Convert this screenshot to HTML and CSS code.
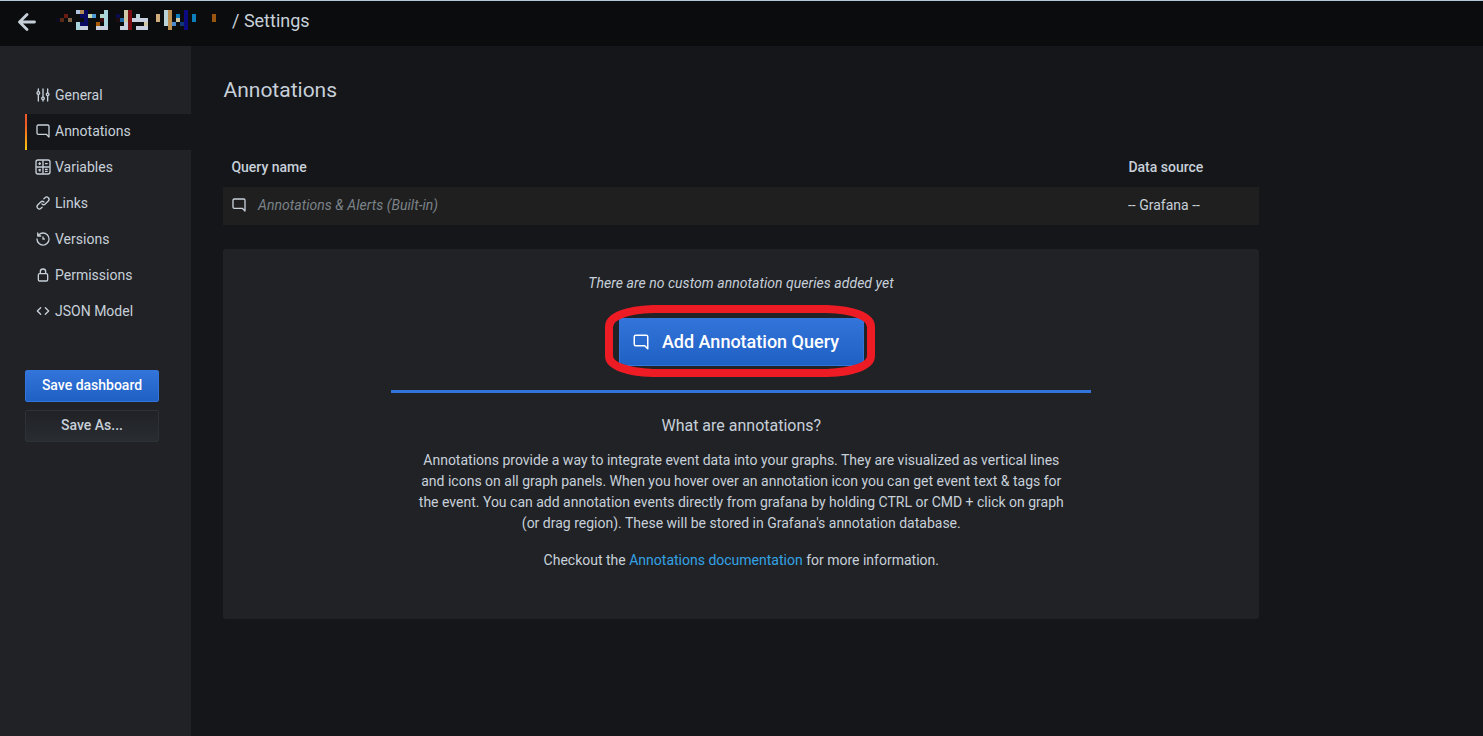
FILE: index.html
```
<!DOCTYPE html>
<html lang="en">
<head>
<meta charset="utf-8">
<title>Settings</title>
<link rel="stylesheet" href="styles.css">
</head>
<body>
<svg class="defs" aria-hidden="true">
  <symbol id="comment" viewBox="0 0 24 24"><path d="M19 2H5a3 3 0 0 0-3 3v10a3 3 0 0 0 3 3h11.59l3.7 3.71A1 1 0 0 0 21 22a.84.84 0 0 0 .38-.08A1 1 0 0 0 22 21V5a3 3 0 0 0-3-3Zm1 16.59-2.29-2.3A1 1 0 0 0 17 16H5a1 1 0 0 1-1-1V5a1 1 0 0 1 1-1h14a1 1 0 0 1 1 1Z"/></symbol>
</svg>
<header class="topbar">
  <svg class="back" viewBox="0 0 18 18"><path d="M9 1.500 1.500 9 9 16.500M2 9H16.500"/></svg>
  <svg class="mosaic" viewBox="0 0 40 5" shape-rendering="crispEdges">
    <path fill="#0d0b20" d="M0 2h1v1h-1z"/><path fill="#5a2a18" d="M1 2h1v1h-1z"/><path fill="#6b1c12" d="M2 1h1v1h-1z"/><path fill="#806448" d="M3 2h1v1h-1z"/>
    <path fill="#b0c2df" d="M5 0h1v1h-1z"/><path fill="#b38b56" d="M6 0h1v1h-1z"/><path fill="#09095f" d="M7 0h1v4h-1zM6 1h1v1h-1zM6 3h1v1h-1z"/>
    <path fill="#c8d8b0" d="M8 1h1v1h-1z"/><path fill="#4c9bd6" d="M9 1h1v1h-1z"/><path fill="#c8d0e0" d="M6 4h2v1h-2zM10 4h3v1h-3z"/>
    <path fill="#a8d4dc" d="M5 3h1v2h-1zM12 0h1v4h-1z"/><path fill="#b0d8c8" d="M11 1h1v1h-1z"/><path fill="#a85a08" d="M10 3h1v1h-1z"/><path fill="#3a0c10" d="M11 2h1v1h-1z"/>
    <path fill="#0d0b50" d="M15 1h1v1h-1z"/><path fill="#1c0c10" d="M15 2h1v1h-1z"/><path fill="#1f68a8" d="M16 2h1v1h-1z"/>
    <path fill="#d0c8a4" d="M17 0h1v3h-1zM22 3h1v1h-1zM30 2h1v1h-1z"/><path fill="#7a0d12" d="M18 0h1v5h-1z"/>
    <path fill="#c8d0e0" d="M17 3h1v1h-1zM16 4h2v1h-2zM19 2h4v1h-4zM20 4h3v1h-3z"/>
    <path fill="#b9d4d8" d="M20 1h1v1h-1zM27 0h1v4h-1z"/><path fill="#cfac7c" d="M25 1h1v2h-1z"/><path fill="#bc9050" d="M28 0h1v5h-1z"/>
    <path fill="#0e7ebc" d="M30 1h1v1h-1zM34 1h1v2h-1z"/><path fill="#4c8acb" d="M29 3h1v1h-1z"/><path fill="#103878" d="M31 3h1v1h-1z"/><path fill="#0b0a80" d="M32 0h1v5h-1z"/><path fill="#9a5610" d="M39 1h1v2h-1z"/>
  </svg>
  <span class="crumb">/ Settings</span>
</header>
<div class="body">
  <aside class="sidebar">
    <nav>
      <a class="item"><svg viewBox="0 0 24 24"><path d="M20 8.18V3a1 1 0 0 0-2 0v5.18a3 3 0 0 0 0 5.64V21a1 1 0 0 0 2 0v-7.18a3 3 0 0 0 0-5.64ZM19 12a1 1 0 1 1 0-2 1 1 0 0 1 0 2Zm-6 2.18V3a1 1 0 0 0-2 0v11.18a3 3 0 0 0 0 5.64V21a1 1 0 0 0 2 0v-1.18a3 3 0 0 0 0-5.64ZM12 18a1 1 0 1 1 0-2 1 1 0 0 1 0 2ZM6 6.18V3a1 1 0 0 0-2 0v3.18a3 3 0 0 0 0 5.64V21a1 1 0 0 0 2 0v-9.18a3 3 0 0 0 0-5.64ZM5 10a1 1 0 1 1 0-2 1 1 0 0 1 0 2Z"/></svg>General</a>
      <a class="item active"><svg><use href="#comment"/></svg>Annotations</a>
      <a class="item"><svg class="line" viewBox="0 0 24 24"><rect x="1.5" y="1.5" width="21" height="21" rx="3"/><path d="M12 2v20M2 12h20M5 7h4M7 5v4M15 7h4M5.5 15.5l3 3M8.500 15.500l-3 3M15 15.500h4M15 18.500h4"/></svg>Variables</a>
      <a class="item"><svg viewBox="0 0 24 24"><path d="m10 17.550-1.770 1.720a2.470 2.470 0 0 1-3.500-3.500l4.540-4.550a2.460 2.460 0 0 1 3.390-.09l.12.100a1 1 0 0 0 1.400-1.430 2.750 2.750 0 0 0-.18-.21 4.460 4.460 0 0 0-6.090.22l-4.600 4.550a4.480 4.480 0 0 0 6.330 6.330L11.370 19A1 1 0 0 0 10 17.550ZM20.690 3.310a4.490 4.490 0 0 0-6.330 0L12.630 5A1 1 0 0 0 14 6.450l1.730-1.720a2.470 2.470 0 0 1 3.500 3.500l-4.540 4.550a2.460 2.460 0 0 1-3.390.09l-.12-.1a1 1 0 0 0-1.400 1.430 2.750 2.750 0 0 0 .23.210 4.470 4.470 0 0 0 6.090-.22l4.550-4.550a4.490 4.490 0 0 0 .04-6.330Z"/></svg>Links</a>
      <a class="item"><svg viewBox="0 0 24 24"><path d="M12 2a10 10 0 0 0-6.880 2.770V3a1 1 0 0 0-2 0v4.500a1 1 0 0 0 1 1h4.500a1 1 0 0 0 0-2H6.220A8 8 0 1 1 4 12a1 1 0 0 0-2 0A10 10 0 1 0 12 2Zm0 6a1 1 0 0 0-1 1v3a1 1 0 0 0 1 1h2a1 1 0 0 0 0-2h-1V9a1 1 0 0 0-1-1Z"/></svg>Versions</a>
      <a class="item"><svg viewBox="0 0 24 24"><path d="M17 9V7A5 5 0 0 0 7 7v2a3 3 0 0 0-3 3v7a3 3 0 0 0 3 3h10a3 3 0 0 0 3-3v-7a3 3 0 0 0-3-3ZM9 7a3 3 0 0 1 6 0v2H9Zm9 12a1 1 0 0 1-1 1H7a1 1 0 0 1-1-1v-7a1 1 0 0 1 1-1h10a1 1 0 0 1 1 1Z"/></svg>Permissions</a>
      <a class="item"><svg class="line" viewBox="0 0 24 24"><path d="M8.500 7 3.500 12l5 5M15.500 7l5 5-5 5" stroke-linecap="round" stroke-linejoin="round"/></svg>JSON Model</a>
    </nav>
    <button class="btn primary">Save dashboard</button>
    <button class="btn secondary">Save As...</button>
  </aside>
  <main class="content">
    <h1>Annotations</h1>
    <div class="row head"><span class="name">Query name</span><span>Data source</span></div>
    <div class="row entry"><span class="name"><svg><use href="#comment"/></svg><em>Annotations &amp; Alerts (Built-in)</em></span><span>-- Grafana --</span></div>
    <section class="card">
      <p class="empty">There are no custom annotation queries added yet</p>
      <div class="cta-wrap">
        <button class="cta"><svg><use href="#comment"/></svg>Add Annotation Query</button>
        <svg class="marker" viewBox="0 0 270 72"><path d="M48 4H222C248 5 266 11 266 22V51C266 61 248 67 222 68H48C22 67 4 61 4 51V22C4 11 22 5 48 4Z"/></svg>
      </div>
      <div class="info">
        <h2>What are annotations?</h2>
        <p>Annotations provide a way to integrate event data into your graphs. They are visualized as vertical lines<br>and icons on all graph panels. When you hover over an annotation icon you can get event text &amp; tags for<br>the event. You can add annotation events directly from grafana by holding CTRL or CMD + click on graph<br>(or drag region). These will be stored in Grafana's annotation database.</p>
        <p>Checkout the <a>Annotations documentation</a> for more information.</p>
      </div>
    </section>
  </main>
</div>
</body>
</html>
```
FILE: styles.css
```
* { box-sizing: border-box; }
body { margin: 0; height: 736px; overflow: hidden; display: flex; flex-direction: column; background: #15161a; color: #c7d0d9; font: 14px/21px Roboto, sans-serif; }
h1, h2, p { margin: 0; font-weight: 400; }
svg { fill: currentColor; flex: none; }
.defs { display: none; }
.topbar { height: 46px; flex: none; display: flex; align-items: flex-start; padding-left: 18px; background: #0b0c0e; border-top: 1px solid #b8c8dc; }
.back { width: 18px; height: 18px; margin-top: 12px; fill: none; stroke: #c7d0d9; stroke-width: 2.8; stroke-linecap: round; stroke-linejoin: round; }
.mosaic { width: 160px; height: 20px; margin: 9px 0 0 20px; }
.crumb { margin: 8px 0 0 16px; font-size: 18px; line-height: 24px; }
.body { flex: 1; display: flex; min-height: 0; }
.sidebar { width: 191px; flex: none; padding: 32px 0 0 25px; background: #212226; }
.item { height: 36px; display: flex; align-items: center; gap: 4px; padding: 0 0 2px 10px; }
.item svg { width: 16px; height: 16px; }
.item.active { position: relative; background: #15161a; }
.item.active::before { content: ""; position: absolute; left: 0; top: 0; width: 2px; height: 100%; background: linear-gradient(#f05a28 30%, #fbca0a); }
.line { fill: none; stroke: currentColor; stroke-width: 2; }
.btn { display: block; width: 134px; height: 32px; padding: 0 0 2px; border-radius: 2px; font: 500 14px/28px Roboto, sans-serif; }
.primary { margin-top: 40px; color: #fff; border: 1px solid #3274d9; background: linear-gradient(#3274d9, #1f60c4); }
.secondary { margin-top: 8px; color: #c7d0d9; border: 1px solid #2c3235; background: linear-gradient(#202226, #292c31); }
.content { width: 1068px; padding: 30px 0 0 32px; }
h1 { padding-left: .5px; font-size: 21px; line-height: 28px; }
.row { height: 38px; display: flex; align-items: center; padding-left: 8px; }
.name { width: 897px; flex: none; display: flex; align-items: center; }
.head { margin-top: 45px; padding-bottom: 2px; padding-left: 8.4px; font-weight: 500; }
.entry { background: #1f1f1f; padding-bottom: 2px; }
.entry svg { width: 16px; height: 16px; margin-right: 11px; }
.entry em { color: #7b8389; letter-spacing: .04px; }
.card { height: 370px; margin-top: 24px; padding-top: 24px; border-radius: 3px; background: #212226; display: flex; flex-direction: column; align-items: center; text-align: center; }
.empty { font-style: italic; letter-spacing: .04px; }
.cta-wrap { position: relative; margin-top: 24px; }
.cta { width: 245px; height: 48px; display: flex; align-items: center; padding: 0 0 0 12px; border: 1px solid #3274d9; border-radius: 2px; background: linear-gradient(#3274d9, #1f60c4); color: #fff; font: 500 18px/46px Roboto, sans-serif; }
.cta svg { width: 18px; height: 18px; margin-right: 12.4px; }
.marker { position: absolute; left: -14px; top: -13px; width: 270px; height: 72px; fill: none; stroke: #ed1c24; stroke-width: 8; }
.info { width: 700px; margin-top: 24px; padding: 22px 0 0 .6px; border-top: 3px solid #3274d9; }
h2 { font-size: 16px; line-height: 21px; margin-bottom: 14px; }
.info p { margin-bottom: 16px; }
.info a { color: #33a2e5; }
```
